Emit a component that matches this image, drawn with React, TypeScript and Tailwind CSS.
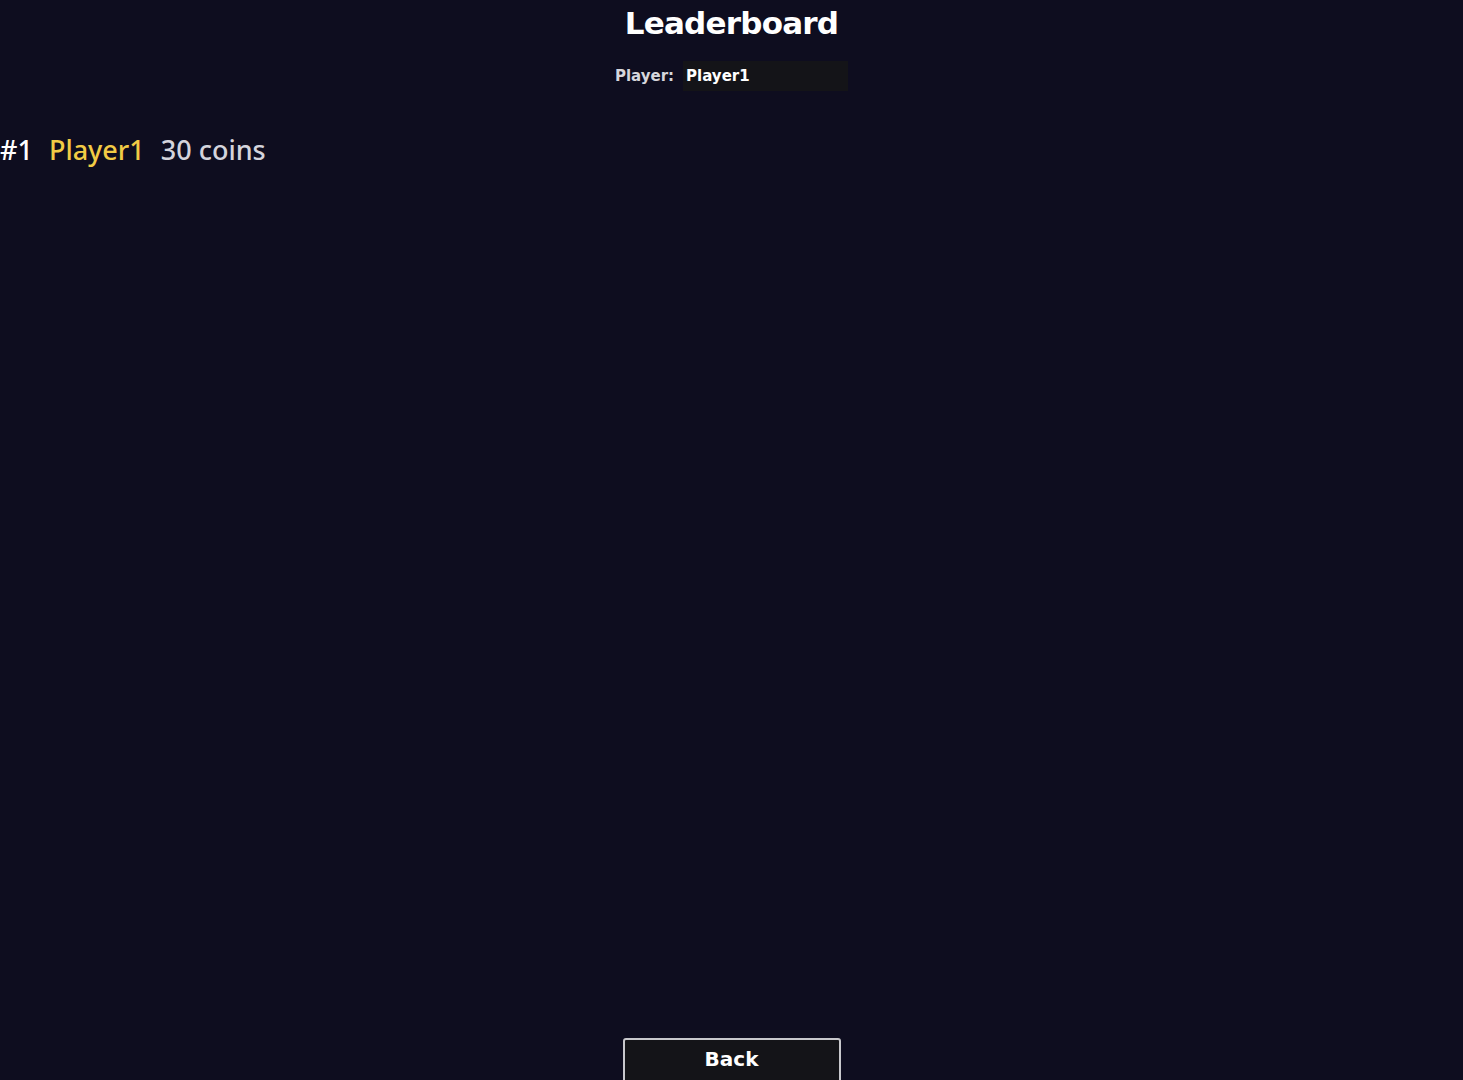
import { useState } from "react";

const entries = [{ rank: 1, name: "Player1", coins: 30 }];

export default function App() {
  const [player, setPlayer] = useState("Player1");

  return (
    <div className="min-h-[1100px] bg-[#0e0d1f] flex flex-col font-['Noto_Sans',sans-serif]">
      {/* Header */}
      <h1 className="text-center text-white text-[31px] leading-[46px] font-black font-['DejaVu_Sans',sans-serif] tracking-tight">
        Leaderboard
      </h1>

      <div className="mt-[15px] flex items-center justify-center gap-[9px]">
        <label className="text-[15px] font-bold text-[#d6d6dc] font-['DejaVu_Sans',sans-serif]">
          Player:
        </label>
        <input
          value={player}
          onChange={(e) => setPlayer(e.target.value)}
          className="w-[165px] h-[30px] px-[3px] bg-[#141418] text-white text-[15px] font-bold font-['DejaVu_Sans',sans-serif] outline-none"
        />
      </div>

      {/* Rows */}
      <ul className="mt-[41px] flex-1">
        {entries.map((e) => (
          <li key={e.rank} className="flex items-center gap-[16px] text-[27px] leading-[36px] font-medium">
            <span className="text-white">#{e.rank}</span>
            <span className="text-[#f2cb45]">{e.name}</span>
            <span className="text-[#d4d4dc]">{e.coins} coins</span>
          </li>
        ))}
      </ul>

      <div className="flex justify-center">
        <button className="w-[218px] h-[62px] pb-[20px] rounded-[3px] border-2 border-[#c8c8cc] bg-[#141418] text-white text-[20px] font-bold font-['DejaVu_Sans',sans-serif]">
          Back
        </button>
      </div>
    </div>
  );
}
